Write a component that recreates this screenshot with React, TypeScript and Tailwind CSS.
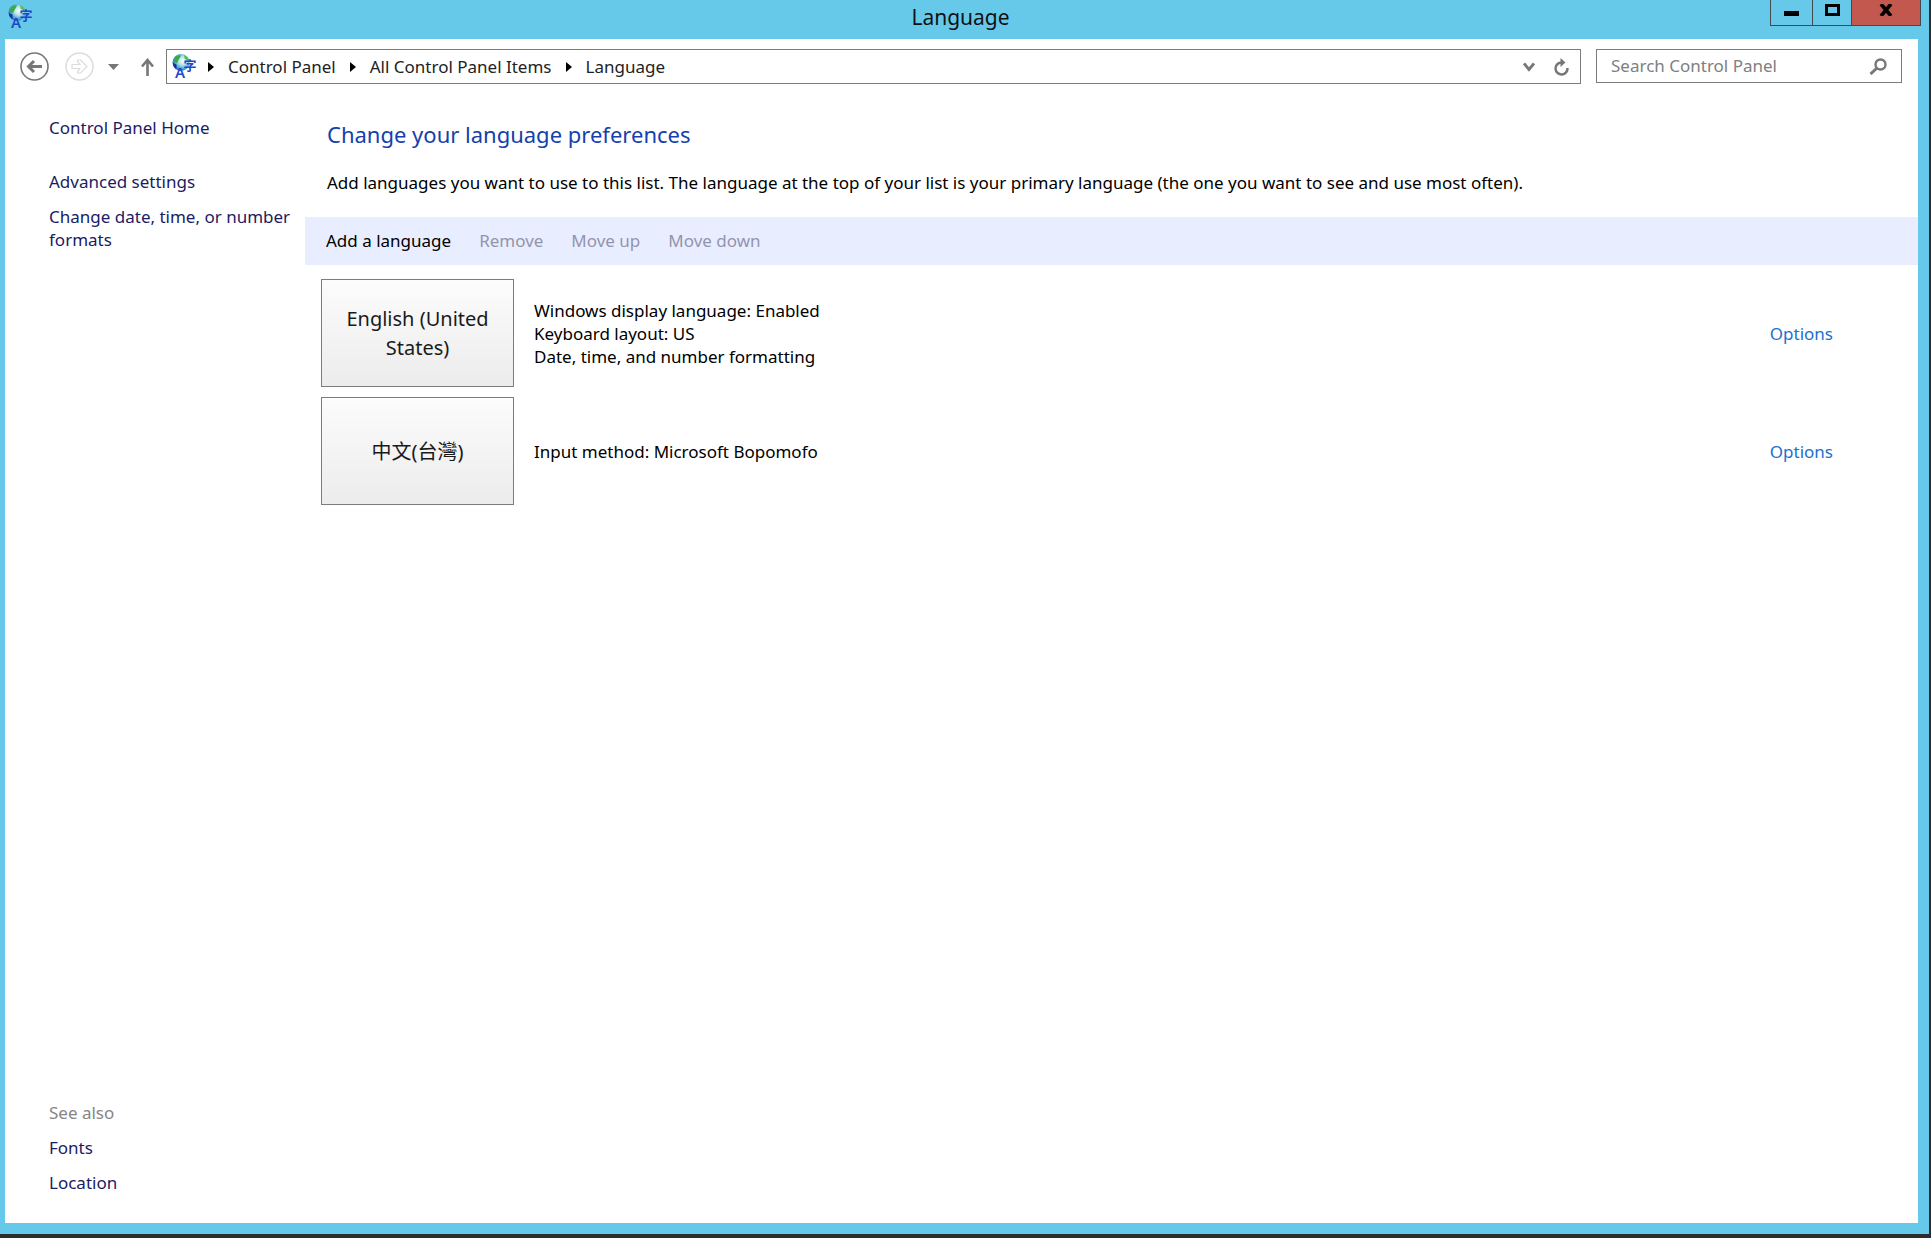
import { useState } from "react";

interface Language {
  name: string;
  details: string[];
}

const languages: Language[] = [
  {
    name: "English (United States)",
    details: [
      "Windows display language: Enabled",
      "Keyboard layout: US",
      "Date, time, and number formatting",
    ],
  },
  { name: "中文(台灣)", details: ["Input method: Microsoft Bopomofo"] },
];

const crumbs = ["Control Panel", "All Control Panel Items", "Language"];

function LanguageIcon() {
  return (
    <svg width="25" height="25" viewBox="0 0 25 25" className="shrink-0 overflow-visible" aria-hidden="true">
      <defs>
        <radialGradient id="globe" cx="0.6" cy="0.4" r="0.7">
          <stop offset="0" stopColor="#f6fff8" />
          <stop offset="0.35" stopColor="#b4e6ea" />
          <stop offset="0.7" stopColor="#3f9fd8" />
          <stop offset="1" stopColor="#1a44b4" />
        </radialGradient>
      </defs>
      <circle cx="9" cy="8.500" r="8.500" fill="url(#globe)" />
      <path d="M2.500 4C4 2 6.500 1 9 1.500L8 3.500L6.500 6L5 9L2 8Z" fill="#3da845" />
      <path d="M12 1C15 2 16.500 4 17.500 6.500L15.500 7L12.500 4.500Z" fill="#56c24e" />
      <path d="M1 9L4.500 10.500L4.500 15C2.500 14 1.500 12 1 10Z" fill="#1a2f9c" />
      <text x="3" y="24" fontSize="15" fontWeight="600" fill="#2148c8" className="font-['Noto_Sans',sans-serif]">
        A
      </text>
      <text x="11.500" y="16" fontSize="13" fontWeight="700" fill="#2148c8" className="font-['Noto_Sans_CJK_TC',sans-serif]">
        字
      </text>
    </svg>
  );
}

function CrumbArrow() {
  return (
    <svg width="6" height="10" viewBox="0 0 6 10" className="mr-[14px] shrink-0">
      <path d="M0 0L6 5L0 10Z" fill="#000" />
    </svg>
  );
}

function TitleBar() {
  return (
    <header className="relative flex h-[39px] shrink-0 items-start justify-between pl-2">
      <div className="pt-1">
        <LanguageIcon />
      </div>
      <h1 className="absolute inset-x-0 top-1 pr-2 text-center text-[21px] leading-[26px] text-[#111]">
        Language
      </h1>
      <div className="relative mr-2 flex h-[26px] border-x border-b border-[#3f4a52]">
        <button aria-label="Minimize" className="flex w-[42px] justify-center border-r border-[#3f4a52] pt-[11px]">
          <svg width="15" height="5">
            <rect width="15" height="5" fill="#000" />
          </svg>
        </button>
        <button aria-label="Maximize" className="flex w-[39px] justify-center border-r border-[#3f4a52] pt-1">
          <svg width="15" height="12">
            <rect x="1.500" y="1.500" width="12" height="9" fill="none" stroke="#000" strokeWidth="3" />
          </svg>
        </button>
        <button aria-label="Close" className="flex w-[68px] justify-center bg-[#c2584e] pt-1">
          <svg width="14" height="12" viewBox="0 0 14 12">
            <path d="M2 0L12 12M12 0L2 12" stroke="#000" strokeWidth="3.600" />
          </svg>
        </button>
      </div>
    </header>
  );
}

function NavBar() {
  const [query, setQuery] = useState("");

  return (
    <nav className="flex items-start pt-[10px] pr-4 pl-[15px]">
      <div className="flex h-[35px] shrink-0 items-center">
        <button aria-label="Back">
          <svg width="29" height="29" viewBox="0 0 29 29" fill="none" stroke="#777">
            <circle cx="14.500" cy="14.500" r="13.500" strokeWidth="1.600" />
            <path d="M22 14.500H9M14 9L8.500 14.500L14 20" strokeWidth="3" />
          </svg>
        </button>
        <button aria-label="Forward" className="ml-4" disabled>
          <svg width="29" height="29" viewBox="0 0 29 29" fill="none" stroke="#dcdcdc">
            <circle cx="14.500" cy="14.500" r="13.500" strokeWidth="1.500" />
            <path d="M7 12.500H15L12.500 9.500V8H15.500L22 14.500L15.500 21H12.500V19.500L15 16.500H7Z" strokeWidth="1.200" />
          </svg>
        </button>
        <button aria-label="Recent pages" className="ml-[14px]">
          <svg width="11" height="6" viewBox="0 0 11 6">
            <path d="M0 0H11L5.500 6Z" fill="#777" />
          </svg>
        </button>
        <button aria-label="Up" className="ml-[22px]">
          <svg width="13" height="18" viewBox="0 0 13 18" fill="none" stroke="#777">
            <path d="M6.500 18V2M1 8.500L6.500 2L12 8.500" strokeWidth="2.600" />
          </svg>
        </button>
      </div>

      <div className="ml-3 flex h-[35px] flex-1 items-center border border-[#7c7c7c] pr-[10px] pl-[5px]">
        <LanguageIcon />
        <ol className="flex flex-1 items-center gap-[14px] pl-[11px]">
          {crumbs.map((crumb) => (
            <li key={crumb} className="flex items-center">
              <CrumbArrow />
              <a href="#" className="text-[#222]">
                {crumb}
              </a>
            </li>
          ))}
        </ol>
        <button aria-label="Previous locations">
          <svg width="12" height="10" viewBox="0 0 12 10" fill="none" stroke="#777">
            <path d="M1 1.500L6 7.500L11 1.500" strokeWidth="2.800" />
          </svg>
        </button>
        <button aria-label="Refresh" className="ml-[18px]">
          <svg width="17" height="18" viewBox="0 0 17 18" fill="none" stroke="#777">
            <path d="M8 4.500A6 6 0 1 0 14.500 10" strokeWidth="2.500" />
            <path d="M7.500 0L12.500 4.500L7.500 9Z" fill="#777" stroke="none" />
          </svg>
        </button>
      </div>

      <label className="ml-[15px] flex h-[34px] w-[306px] items-center border border-[#7c7c7c] px-[14px]">
        <input
          type="text"
          aria-label="Search Control Panel"
          placeholder="Search Control Panel"
          value={query}
          onChange={(e) => setQuery(e.target.value)}
          className="min-w-0 flex-1 outline-none placeholder:text-[#808080]"
        />
        <svg width="18" height="17" viewBox="0 0 18 17" fill="none" stroke="#777">
          <circle cx="11.500" cy="6.500" r="5" strokeWidth="2.400" />
          <path d="M8 10L1.500 16" strokeWidth="3" />
        </svg>
      </label>
    </nav>
  );
}

function Sidebar() {
  return (
    <aside className="flex w-[300px] shrink-0 flex-col items-start pt-8 pr-2 pb-[29px] pl-11 leading-[23px] text-[#1b1b64]">
      <a href="#">Control Panel Home</a>
      <a href="#" className="mt-[31px]">Advanced settings</a>
      <a href="#" className="mt-3">Change date, time, or number formats</a>
      <div className="mt-auto flex flex-col items-start gap-3">
        <h2 className="text-[#868686]">See also</h2>
        <a href="#">Fonts</a>
        <a href="#">Location</a>
      </div>
    </aside>
  );
}

export default function App() {
  const [selected, setSelected] = useState<string | null>(null);

  return (
    <div className="flex min-h-screen bg-[#2b2e30] pr-[2px] pb-1 font-['Noto_Sans','Noto_Sans_CJK_TC',sans-serif] text-[17px] leading-[22px]">
      <div className="flex flex-1 flex-col bg-[#66c9ea]">
        <TitleBar />
        <div className="mr-[11px] mb-[11px] ml-[5px] flex flex-1 flex-col bg-white">
          <NavBar />
          <div className="flex flex-1">
            <Sidebar />
            <main className="min-w-0 flex-1 pt-9">
              <h2 className="pl-[22px] text-[22px] leading-[28px] text-[#1540ad]">
                Change your language preferences
              </h2>
              <p className="mt-6 pl-[22px] text-black">
                Add languages you want to use to this list. The language at the top of your list is your primary
                language (the one you want to see and use most often).
              </p>
              <div className="mt-[23px] flex h-12 items-center gap-7 bg-[#e8eeff] pl-[21px]">
                <button className="text-black">Add a language</button>
                <button disabled={!selected} className="disabled:text-[#9494ad]">Remove</button>
                <button disabled={!selected} className="disabled:text-[#9494ad]">Move up</button>
                <button disabled={!selected} className="disabled:text-[#9494ad]">Move down</button>
              </div>
              <ul className="flex flex-col gap-[10px] pt-[14px] pr-[85px] pl-4 leading-[23px]">
                {languages.map((language) => (
                  <li key={language.name} className="flex items-center">
                    <button
                      onClick={() => setSelected(language.name)}
                      className="h-[108px] w-[193px] shrink-0 border border-[#7c7c7c] bg-linear-to-b from-[#fcfcfc] to-[#ececec] px-4 text-[20px] leading-[29px] text-[#1a1a1a]"
                    >
                      {language.name}
                    </button>
                    <div className="flex-1 pl-5 text-black">
                      {language.details.map((line) => (
                        <p key={line}>{line}</p>
                      ))}
                    </div>
                    <a href="#" className="text-[#1a70d0]">Options</a>
                  </li>
                ))}
              </ul>
            </main>
          </div>
        </div>
      </div>
    </div>
  );
}
